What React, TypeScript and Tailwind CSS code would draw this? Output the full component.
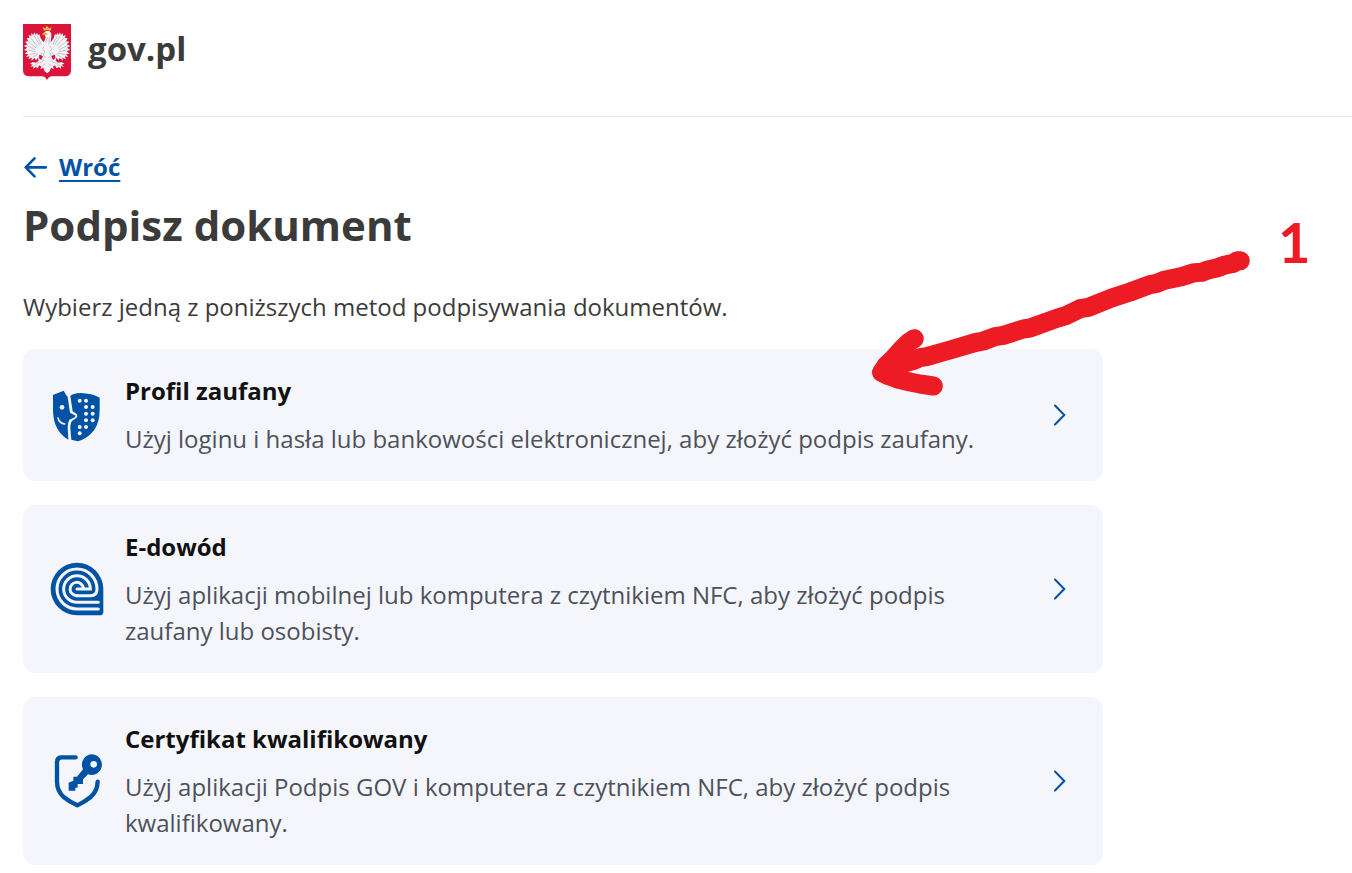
import React from "react"

type Method = {
    id: string
    title: string
    description: string
    icon: React.ReactNode
}

function Emblem() {
    const wing = (
        <g>
            <path
                fill="#f4f4f6"
                d="M84 70 L76 72 Q66 62 64 48 L60 52 L57 44 L53 51 L49 43 L46 51 L40 45 L40 54 L32 51 L34 60 L26 60 L31 69 L21 72 L29 79 L18 84 L28 89 L18 96 L29 99 L20 108 L31 108 L24 117 L35 115 L31 124 L42 119 L40 128 L50 120 L54 127 L60 119 L62 128 L54 134 L44 132 L36 137 L44 140 L37 146 L47 145 L45 153 L53 147 L59 151 L64 142 L70 146 L67 154 L76 149 L80 160 L88 166 L88 70 Z"
            />
            <g stroke="#a9a9b6" strokeWidth="2" fill="none">
                <path d="M35 57 L58 84 M29 68 L54 90 M27 82 L52 96 M29 96 L52 101 M34 110 L55 105 M44 118 L60 108 M48 53 L65 80 M58 55 L70 80" />
                <path d="M62 118 L72 104 M56 136 L68 134 L78 126 M48 142 L58 141 M74 146 L82 136" />
                <path d="M78 84 L74 94 L80 101 L76 112 L84 120" />
            </g>
            <path d="M64 110 L75 114 L70 126 L63 121 Z" fill="#dc143c" />
        </g>
    )

    return (
        <svg className="h-[66px] w-[60px] shrink-0" viewBox="0 0 180 198" aria-label="Godło Polski">
            <path
                fill="#dc143c"
                d="M15 18 H159 V157 Q159 175 140 175 H102 Q92 176 87 186 Q82 176 72 175 H34 Q15 175 15 157 Z"
            />
            {wing}
            <g transform="matrix(-1 0 0 1 175 0)">{wing}</g>
            <path fill="#f4f4f6" d="M78 46 Q80 38 90 38 Q101 40 100 54 L98 72 L78 72 L83 58 Z" />
            <path d="M88 58 L84 76 M94 58 L93 80" stroke="#a9a9b6" strokeWidth="2" fill="none" />
            <path fill="#dda72f" d="M86 45 L76 44 Q71 47 74 52 L81 50 L89 51 Z" />
            <path fill="#f2bd35" d="M78 38 L74 28 L82 31 L87 23 L93 31 L101 28 L97 39 Q87 34 78 38 Z" />
        </svg>
    )
}

function ProfileIcon() {
    return (
        <svg className="h-[66px] w-16" viewBox="0 0 192 198">
            <path
                fill="#0052a5"
                d="M24 39 L56 26 Q61 36 68 45 L75 92 L92 101 L89 106 L73 113 Q68 122 68 136 L70 173 Q42 158 31 127 Q24 108 24 80 Z"
            />
            <path
                fill="#0052a5"
                d="M76 42 Q84 34 106 33 Q141 34 164 47 V83 Q164 119 148 143 Q129 169 98 178 L79 173 L76 138 Q76 121 82 116 L94 108 Q99 103 96 97 L83 88 Z"
            />
            <path d="M39 108 Q43 124 59 126" fill="none" stroke="#f5f6fb" strokeWidth="5" strokeLinecap="round" />
            <g fill="#f5f6fb">
                <circle cx="51" cy="76" r="7" />
                <circle cx="104" cy="56" r="6" />
                <circle cx="123" cy="56" r="6" />
                <circle cx="123" cy="75" r="6" />
                <circle cx="143" cy="75" r="6" />
                <circle cx="123" cy="95" r="6" />
                <circle cx="143" cy="95" r="6" />
                <circle cx="123" cy="115" r="6" />
                <circle cx="143" cy="115" r="6" />
                <circle cx="104" cy="135" r="6" />
                <circle cx="123" cy="135" r="6" />
                <circle cx="104" cy="154" r="6" />
            </g>
        </svg>
    )
}

function IdCardIcon() {
    return (
        <svg className="h-[66px] w-16" viewBox="0 0 192 198">
            <path
                fill="#0052a5"
                d="M96 20 A79 79 0 0 1 175 99 V167 Q175 178 164 178 H96 A79 79 0 0 1 96 20 Z"
            />
            <g fill="none" stroke="#f5f6fb" strokeWidth="9" strokeLinecap="round">
                <path d="M160 159 H96 A60 60 0 1 1 156 99 Q156 119 137 119 H96" />
                <path d="M160 139 H96 A40 40 0 1 1 136 99 H96" />
                <path d="M96 119 A20 20 0 1 1 115 96" />
            </g>
        </svg>
    )
}

function CertificateIcon() {
    return (
        <svg className="h-[66px] w-16" viewBox="0 0 192 198">
            <path
                d="M92 28 H49 Q36 29 36 42 V101 Q36 128 56 147 Q73 161 97 172 Q120 161 137 147 Q157 130 158 101"
                fill="none"
                stroke="#0052a5"
                strokeWidth="13"
                strokeLinecap="round"
                strokeLinejoin="round"
            />
            <path
                fill="#0052a5"
                fillRule="evenodd"
                d="M142 19 A31 31 0 1 1 129 79 L114 94 V108 H98 V119 H91 V128 H71 V104 L85 98 V86 H96 L114 64 A31 31 0 0 1 142 19 Z M146 39 A10 10 0 1 0 146 59 A10 10 0 1 0 146 39 Z"
            />
        </svg>
    )
}

const methods: Method[] = [
    {
        id: "profil",
        title: "Profil zaufany",
        description: "Użyj loginu i hasła lub bankowości elektronicznej, aby złożyć podpis zaufany.",
        icon: <ProfileIcon />,
    },
    {
        id: "edowod",
        title: "E-dowód",
        description: "Użyj aplikacji mobilnej lub komputera z czytnikiem NFC, aby złożyć podpis zaufany lub osobisty.",
        icon: <IdCardIcon />,
    },
    {
        id: "certyfikat",
        title: "Certyfikat kwalifikowany",
        description: "Użyj aplikacji Podpis GOV i komputera z czytnikiem NFC, aby złożyć podpis kwalifikowany.",
        icon: <CertificateIcon />,
    },
]

function Annotation() {
    return (
        <div className="pointer-events-none absolute left-[860px] top-[210px]">
            <svg className="h-[200px] w-[470px]" viewBox="0 0 1410 600">
                <g fill="none" stroke="#ed1c24" strokeWidth="57" strokeLinecap="round" strokeLinejoin="round">
                    <path d="M1141 152 L1132 152 L1120 160 L1095 165 L1070 174 L1040 181 L1025 187 L1003 188 L965 200 L912 211 L890 220 L870 224 L810 246 L755 264 L685 292 L660 296 L620 316 L590 325 L510 354 L490 357 L430 376 L405 380 L370 393 L345 398 L270 420 L200 440 L180 443 L160 452 L90 470 L65 487" />
                    <path d="M163 386 L145 398 L125 418 L100 446 L78 467 L65 487 L85 497 L110 506 L150 516 L180 522 L220 528" />
                </g>
            </svg>
            <span className="absolute left-[418px] top-0 font-['Lato',sans-serif] text-[56px] font-bold leading-[64px] text-[#ed1c24]">
                1
            </span>
        </div>
    )
}

export default function App() {
    const methodList = methods.map(method => {
        return (
            <li key={method.id}>
                <a href="#" className="flex items-center rounded-xl bg-[#f5f6fb] py-6 pl-[22px] pr-[35px]">
                    <div className="mr-4 shrink-0">{method.icon}</div>
                    <div className="flex grow flex-col gap-y-3">
                        <h2 className="font-bold text-[#111111]">{method.title}</h2>
                        <p className="max-w-[860px] text-[#4d515c]">{method.description}</p>
                    </div>
                    <svg className="h-6 w-4 shrink-0" viewBox="0 0 16 24" fill="none">
                        <path d="M3 2.5 L12.3 12 L3 21.5" stroke="#0052a5" strokeWidth="2" strokeLinecap="round" />
                    </svg>
                </a>
            </li>
        )
    })

    return (
        <div className="relative h-[873px] overflow-hidden bg-white pl-[23px] font-['Open_Sans',sans-serif] text-2xl leading-9 text-[#3b3b3b]">
            <header className="flex h-[117px] items-start border-b border-[#e8e8e8] pt-[18px]">
                <div className="-ml-[5px] flex items-center">
                    <Emblem />
                    <span className="-mt-1 ml-2.5 text-[33px] font-bold">gov.pl</span>
                </div>
            </header>
            <main className="w-[1080px]">
                <a href="#" className="mt-8 flex items-center gap-x-3 font-bold text-[#0052a5]">
                    <svg className="size-6" viewBox="0 0 24 24" fill="none">
                        <path
                            d="M23 12.4 H3 M11.5 3.4 L2.7 12.4 L11.5 21.4"
                            stroke="#0052a5"
                            strokeWidth="2.6"
                            strokeLinecap="round"
                            strokeLinejoin="round"
                        />
                    </svg>
                    <span className="underline decoration-2 underline-offset-4">Wróć</span>
                </a>
                <h1 className="mt-3 text-[42px] font-bold leading-[56px]">Podpisz dokument</h1>
                <p className="mt-9">Wybierz jedną z poniższych metod podpisywania dokumentów.</p>
                <ul className="mt-6 flex flex-col gap-y-6">{methodList}</ul>
            </main>
            <Annotation />
        </div>
    )
}
